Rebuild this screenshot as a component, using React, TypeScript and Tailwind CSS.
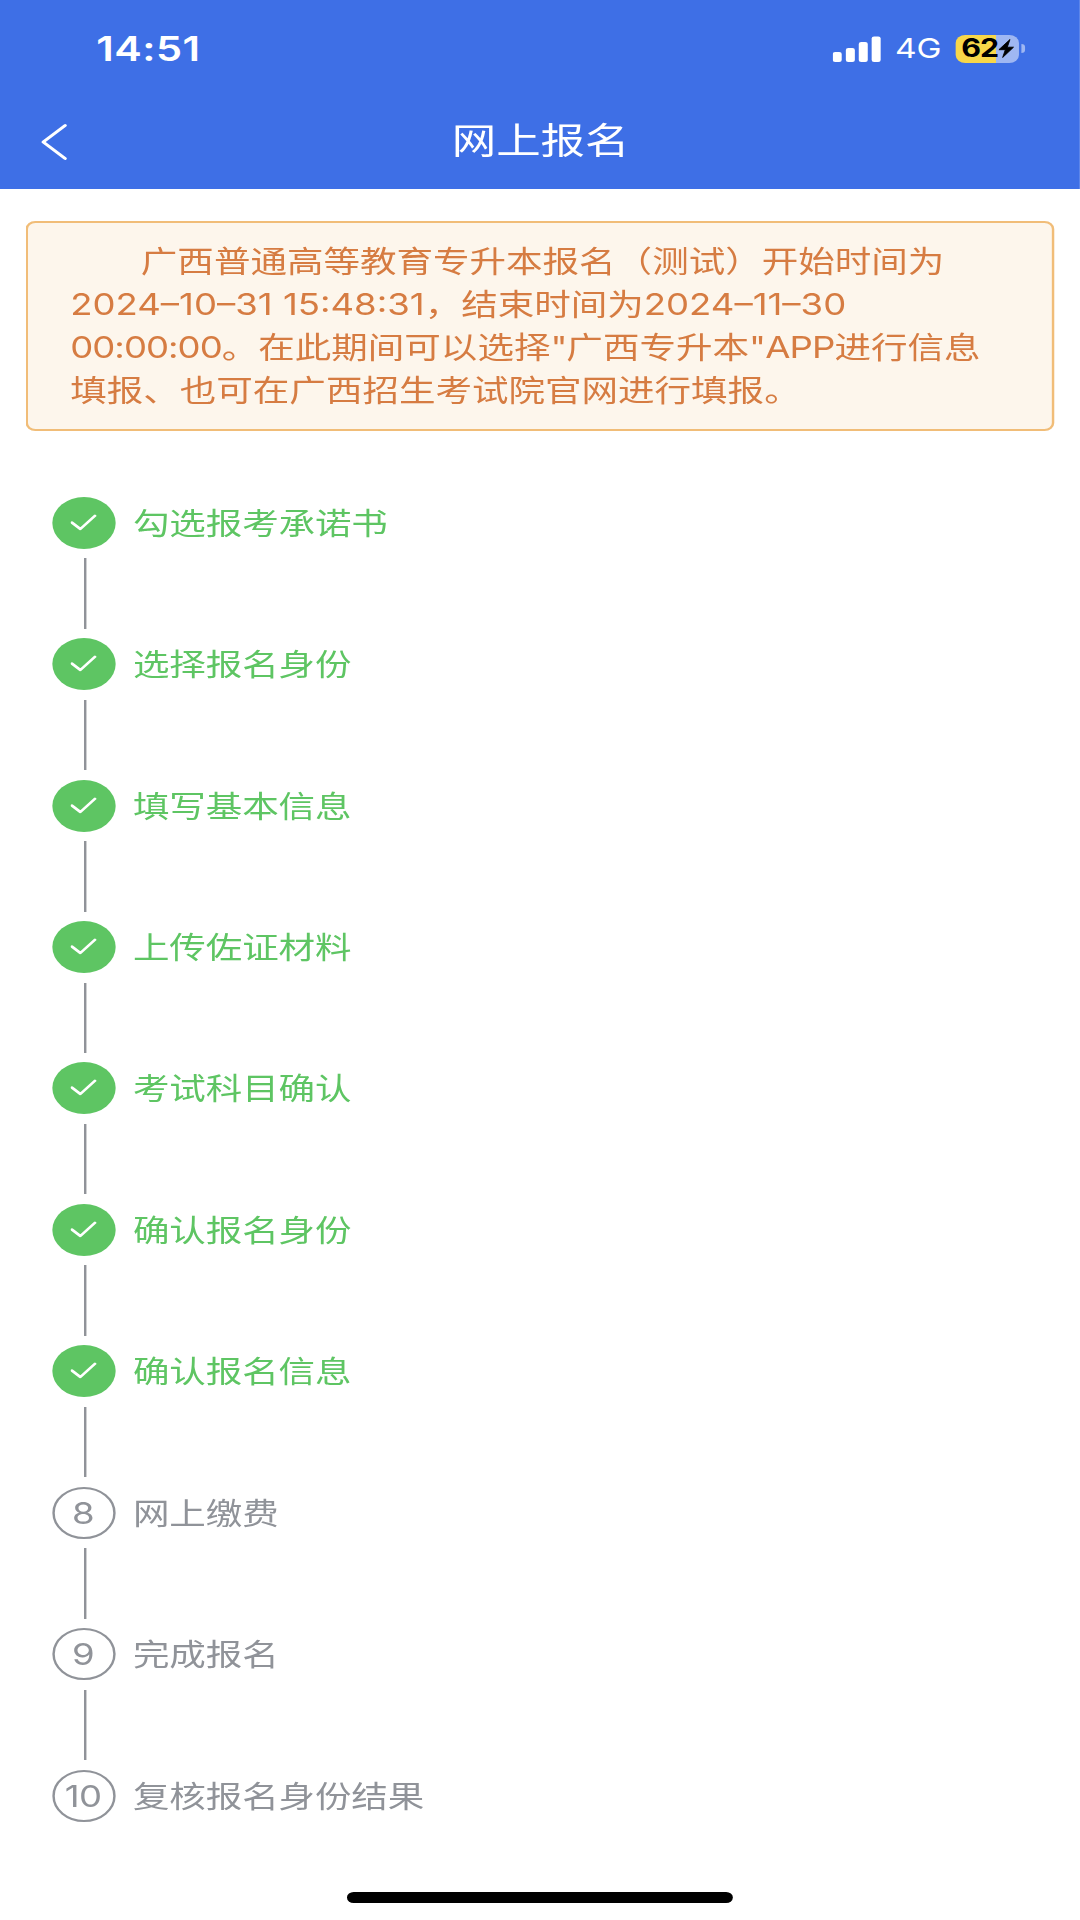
type Step = {
    title: string;
    done: boolean;
};

const steps: Step[] = [
    { title: '勾选报考承诺书', done: true },
    { title: '选择报名身份', done: true },
    { title: '填写基本信息', done: true },
    { title: '上传佐证材料', done: true },
    { title: '考试科目确认', done: true },
    { title: '确认报名身份', done: true },
    { title: '确认报名信息', done: true },
    { title: '网上缴费', done: false },
    { title: '完成报名', done: false },
    { title: '复核报名身份结果', done: false },
];

function StatusBar() {
    return (
        <div className="flex h-[96px] items-center justify-between pl-[79px] pr-[45.5px] pt-px">
            <span className="text-[34px] leading-none font-semibold tracking-[0.4px]">14:51</span>
            <div className="flex items-center">
                {/* Signal */}
                <svg className="shrink-0" width="40" height="26" viewBox="0 0 40 26" fill="currentColor">
                    <rect x="0" y="16" width="7.4" height="10" rx="2" />
                    <rect x="10.8" y="12" width="7.4" height="14" rx="2" />
                    <rect x="21.4" y="6" width="7.4" height="20" rx="2" />
                    <rect x="32" y="0.5" width="7.4" height="25.5" rx="2" />
                </svg>
                <span className="ml-[11.5px] w-[50px] pt-px text-[27.5px] leading-none">4G</span>
                {/* Battery */}
                <div className="flex shrink-0 items-center">
                    <div className="flex h-7 w-[51.5px] items-center rounded-[8px] bg-[linear-gradient(90deg,#f8d749_63%,#9fb7f2_63%)] pl-[4.5px] text-black">
                        <span className="text-[25px] leading-none font-bold tracking-[-0.8px]">62</span>
                        <svg className="shrink-0" width="13" height="19" viewBox="0 0 13 19" fill="currentColor">
                            <path d="M9.6 0.5 L0.5 10.7 H5.8 L3.6 18.5 L12.5 8.2 H7.4 Z" stroke="currentColor" strokeWidth="0.8" strokeLinejoin="round" />
                        </svg>
                    </div>
                    <div className="ml-[2px] h-[9px] w-[3px] rounded-r-full bg-[#9fb7f2]" />
                </div>
            </div>
        </div>
    );
}

function Header() {
    return (
        <header className="h-[188.5px] shrink-0 bg-[#3e6fe6] text-white">
            <StatusBar />
            <div className="grid h-[91px] grid-cols-[1fr_auto_1fr] items-center">
                <svg className="mt-px ml-[33px]" width="24" height="38" viewBox="0 0 24 38" fill="none" stroke="currentColor" strokeWidth="2.8" strokeLinecap="round" strokeLinejoin="round">
                    <path d="M20.5 2.5 L2.5 19 L20.5 35.5" />
                </svg>
                <h1 className="pl-px text-[36.5px] leading-none">网上报名</h1>
            </div>
        </header>
    );
}

function Notice() {
    return (
        <div className="mx-[21.2px] mt-[32.5px] h-[209.5px] shrink-0 rounded-[8px] border-2 border-[#f1bd78] bg-[#fdf6ec] pt-[17px] pl-[34.5px] text-[30px] leading-[42.9px] whitespace-nowrap text-[#d67c42]">
            <p className="indent-[58px]">
                广西普通高等教育专升本报名（测试）开始时间为
                <br />
                2024–10–31 15:48:31，结束时间为2024–11–30
                <br />
                <span className="tracking-[-0.8px]">00:00:00</span>。在此期间可以选择
                <span className="tracking-[-0.9px]">"</span>广西专升本
                <span className="tracking-[-0.7px]">"APP</span>进行信息
                <br />
                填报、也可在广西招生考试院官网进行填报。
            </p>
        </div>
    );
}

function StepItem({ step, index, last }: { step: Step; index: number; last: boolean }) {
    return (
        <li className={step.done ? 'h-[141.45px] text-[#5ec563]' : 'h-[141.45px] text-[#909399]'}>
            <div className="flex items-center gap-[14.5px]">
                {step.done ? (
                    <div className="flex size-[52px] items-center justify-center rounded-full bg-[#5ec563]">
                        <svg width="22" height="18" viewBox="0 0 22 18" fill="none" stroke="white" strokeWidth="2.4" strokeLinecap="round" strokeLinejoin="round">
                            <path d="M1 8.5 L8 15 L20 1.8" />
                        </svg>
                    </div>
                ) : (
                    <div className="flex size-[52px] items-center justify-center rounded-full border-2 border-[#909399]">
                        <span className="pr-px text-[30px] leading-none tracking-[-0.6px]">{index + 1}</span>
                    </div>
                )}
                <span className="text-[30px] leading-none tracking-[-0.1px]">{step.title}</span>
            </div>
            {!last && <div className="mt-[9.5px] ml-[26px] h-[70.5px] w-[2.2px] bg-[#909399]" />}
        </li>
    );
}

export default function App() {
    return (
        <div className="h-[1920px] w-[1080px] overflow-hidden bg-white">
            <div className="flex h-full w-[887.14px] origin-left scale-x-[1.2174] flex-col font-['Inter','Noto_Sans_CJK_SC',sans-serif]">
                <Header />
                <Notice />
                <ul className="mt-[66.2px] ml-[42.7px] min-h-0 flex-1">
                    {steps.map((step, index) => (
                        <StepItem key={step.title} step={step} index={index} last={index === steps.length - 1} />
                    ))}
                </ul>
                <div className="mx-auto mb-[17px] h-[11px] w-[317px] shrink-0 rounded-full bg-black" />
            </div>
        </div>
    );
}
